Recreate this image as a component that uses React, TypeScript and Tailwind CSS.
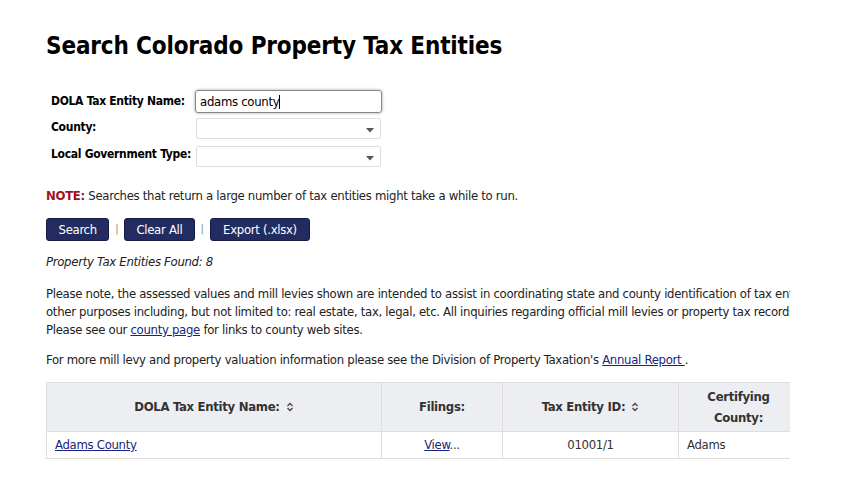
import { FC } from 'react'

const SortIcon: FC = () => (
  <svg className="inline-block ml-1.5 -mt-0.5" width="8" height="10" viewBox="0 0 8 10" fill="none" stroke="#444" strokeWidth="1.3">
    <path d="M1.5 4 L4 1.5 L6.5 4" />
    <path d="M1.5 6 L4 8.5 L6.5 6" />
  </svg>
)

const Caret: FC = () => (
  <svg width="8" height="5" viewBox="0 0 8 5" className="absolute right-[6px] top-[9px]">
    <path d="M0 0 H8 L4 4.5 Z" fill="#555" />
  </svg>
)

const App: FC = () => {
  const font = { fontFamily: 'Tahoma, "DejaVu Sans Condensed", "Liberation Sans", sans-serif' }
  const label = 'whitespace-nowrap text-[12px] font-bold text-black align-top'

  return (
    <div className="w-[844px] h-[483px] bg-white text-[13px] tracking-[-0.3px] text-[#222] overflow-hidden" style={font}>
      <div className="ml-[46px] w-[744px] overflow-hidden">
        {/* Title */}
        <h1 className="pt-[28px] text-[24px] font-bold text-black leading-[36px] tracking-[-0.15px]">
          Search Colorado Property Tax Entities
        </h1>

        {/* Search form */}
        <table className="mt-[24px] ml-[1px] border-separate border-spacing-x-[4px] border-spacing-y-[2px]">
          <tbody>
            <tr>
              <td className={`${label} pt-[2px]`}>DOLA Tax Entity Name:</td>
              <td>
                <div className="w-[187px] h-[23px] border border-[#888] rounded-[3px] shadow-[0_0_3px_#999] flex items-center px-[4px] text-black">
                  adams county<span className="w-px h-[14px] bg-black" />
                </div>
              </td>
            </tr>
            <tr>
              <td className={`${label} pt-[3px]`}>County:</td>
              <td>
                <div className="relative w-[185px] h-[21px] border border-[#ddd] rounded-[2px] ml-[1px] mt-[3px]">
                  <Caret />
                </div>
              </td>
            </tr>
            <tr>
              <td className={`${label} pt-[4px]`}>Local Government Type:</td>
              <td>
                <div className="relative w-[185px] h-[21px] border border-[#ddd] rounded-[2px] ml-[1px] mt-[5px]">
                  <Caret />
                </div>
              </td>
            </tr>
          </tbody>
        </table>

        <p className="mt-[18px] leading-[18px]">
          <span className="font-bold text-[#a1121c]">NOTE:</span> Searches that return a large number of tax entities might take a while to run.
        </p>

        {/* Actions */}
        <div className="mt-[13px] flex items-center text-white">
          <button className="h-[23px] px-[11.5px] bg-[#222c61] rounded-[3px] border border-[#151c45]">Search</button>
          <span className="mx-[6px] text-[#888] text-[11px]">|</span>
          <button className="h-[23px] px-[11px] bg-[#222c61] rounded-[3px] border border-[#151c45]">Clear All</button>
          <span className="mx-[6px] text-[#888] text-[11px]">|</span>
          <button className="h-[23px] px-[12.5px] bg-[#222c61] rounded-[3px] border border-[#151c45]">Export (.xlsx)</button>
        </div>

        <p className="mt-[12px] italic leading-[18px]">Property Tax Entities Found: 8</p>

        <p className="mt-[14px] leading-[18px] whitespace-nowrap">
          Please note, the assessed values and mill levies shown are intended to assist in coordinating state and county identification of tax entities and are not to be used for
          <br />
          other purposes including, but not limited to: real estate, tax, legal, etc. All inquiries regarding official mill levies or property tax records should be directed to the county.
          <br />
          Please see our <a href="#" className="text-[#1a237e] underline">county page</a> for links to county web sites.
        </p>

        <p className="mt-[12px] leading-[18px] whitespace-nowrap">
          For more mill levy and property valuation information please see the Division of Property Taxation's{' '}
          <a href="#" className="text-[#1a237e] underline">Annual Report </a>.
        </p>

        {/* Results */}
        <table className="mt-[13px] w-[900px] border-collapse border border-[#ddd] text-[#333]">
          <thead>
            <tr className="bg-[#eceef2] h-[49px]">
              <th className="w-[335px] border border-[#ddd] font-bold text-center">
                DOLA Tax Entity Name:<SortIcon />
              </th>
              <th className="w-[121px] border border-[#ddd] font-bold text-center">Filings:</th>
              <th className="w-[176px] border border-[#ddd] font-bold text-center">
                Tax Entity ID:<SortIcon />
              </th>
              <th className="w-[120px] border border-[#ddd] font-bold text-center leading-[21px] px-2">
                Certifying County:
              </th>
              <th className="border border-[#ddd] font-bold text-center">Local Government Type:</th>
            </tr>
          </thead>
          <tbody>
            <tr className="h-[27px]">
              <td className="border border-[#ddd] px-[8px]">
                <a href="#" className="text-[#1a237e] underline">Adams County</a>
              </td>
              <td className="border border-[#ddd] text-center">
                <a href="#" className="text-[#1a237e] underline">View</a>...
              </td>
              <td className="border border-[#ddd] text-center">01001/1</td>
              <td className="border border-[#ddd] px-[8px]">Adams</td>
              <td className="border border-[#ddd] px-[8px]">County</td>
            </tr>
          </tbody>
        </table>
      </div>
    </div>
  )
}

export default App
